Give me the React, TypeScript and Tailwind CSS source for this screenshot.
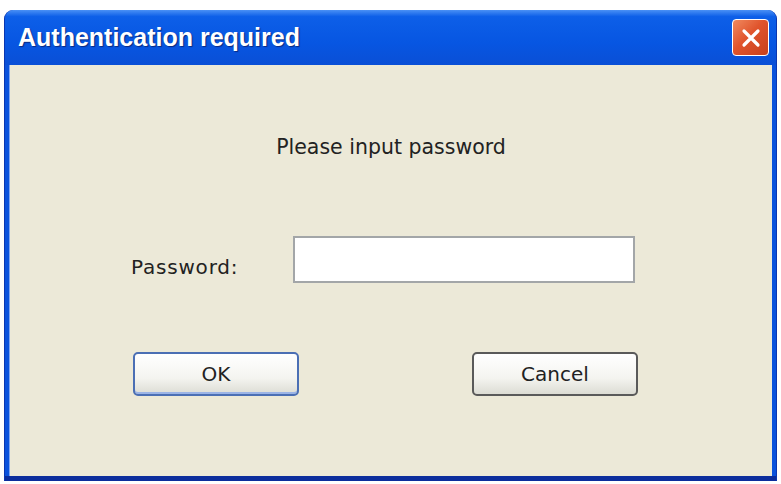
export default function App() {
  return (
    <div className="w-[781px] h-[484px] bg-white pt-[10px] pl-[4px] pr-[4px] pb-[3px] font-['DejaVu_Sans',sans-serif]">
      <div className="flex h-full flex-col overflow-hidden rounded-t-[9px] border-x border-[#0a36b0] bg-[#0a52dc]">
        {/* title bar */}
        <div className="flex h-[55px] shrink-0 items-center justify-between bg-[linear-gradient(180deg,#4a90f5_0%,#0d5fe8_12%,#0756e2_60%,#0a4fd6_100%)] pl-[13px] pr-[7px]">
          <span className="font-['Liberation_Sans',sans-serif] text-[25px] font-bold text-white [text-shadow:1px_1px_1px_#0a2a80]">
            Authentication required
          </span>
          <button className="flex h-[37px] w-[37px] items-center justify-center rounded-[4px] border border-white bg-[linear-gradient(135deg,#f08a60_0%,#e0542c_45%,#c8401c_100%)]">
            <svg width="24" height="24" viewBox="0 0 24 24">
              <path d="M5 5 L19 19 M19 5 L5 19" stroke="#fff" strokeWidth="3.2" strokeLinecap="round" />
            </svg>
          </button>
        </div>

        {/* body */}
        <div className="mx-[4px] flex flex-1 flex-col items-center border-l border-[#7fa6f0] bg-[#ece9d8] text-[#222]">
          <p className="mt-[67px] text-[20.5px]">Please input password</p>

          <div className="mt-[73px] flex items-center self-start">
            <span className="ml-[121px] w-[162px] pt-[16px] text-[20px] tracking-[0.8px]">Password:</span>
            <input
              type="password"
              className="h-[47px] w-[342px] border-2 border-[#a3a6a8] bg-white outline-none"
            />
          </div>

          <div className="ml-[123px] mt-[69px] flex gap-[173px] self-start">
            <button className="h-[44px] w-[166px] rounded-[5px] border-2 border-[#4b6fb4] bg-[linear-gradient(180deg,#ffffff_0%,#f4f4f0_60%,#dcdcd4_100%)] text-[20px] text-[#222] shadow-[inset_0_-2px_0_#9bb4e6]">
              OK
            </button>
            <button className="h-[44px] w-[166px] rounded-[5px] border-2 border-[#5a5a5a] bg-[linear-gradient(180deg,#ffffff_0%,#f4f4f0_60%,#dcdcd4_100%)] text-[20px] text-[#222]">
              Cancel
            </button>
          </div>
        </div>
        <div className="h-[5px] shrink-0 bg-[#0b2d9c]" />
      </div>
    </div>
  );
}
